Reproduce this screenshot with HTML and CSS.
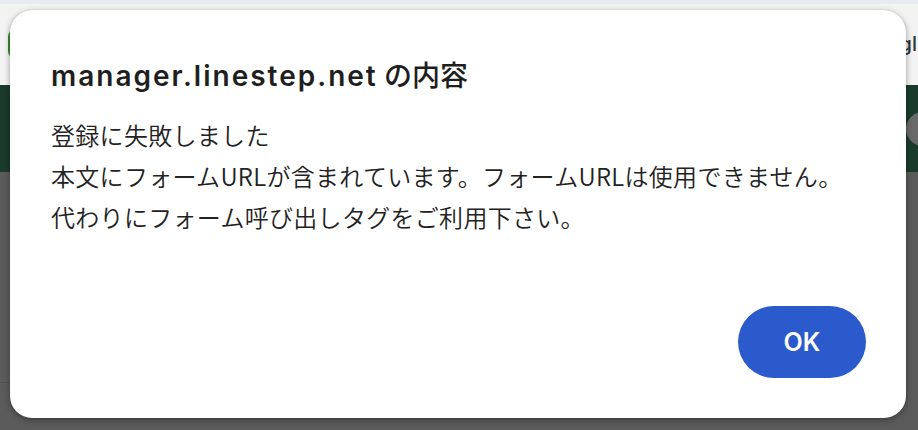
FILE: index.html
```html
<!DOCTYPE html>
<html lang="ja">
<head>
<meta charset="utf-8">
<title>manager.linestep.net の内容</title>
<link rel="stylesheet" href="styles.css">
</head>
<body>
<div class="page">
  <div class="topstrip"></div>
  <div class="toolbar">
    <span class="pill"></span>
    <span class="brand">gl</span>
  </div>
  <div class="band">
    <span class="avatar"></span>
  </div>
  <div class="content">
    <div class="panel"></div>
  </div>
</div>

<div class="dialog" role="alertdialog">
  <h1 class="title"><span class="host">manager.linestep.net</span> <span class="suffix">の内容</span></h1>
  <div class="message">
    <p>登録に失敗しました</p>
    <p>本文にフォームURLが含まれています。フォームURLは使用できません。</p>
    <p>代わりにフォーム呼び出しタグをご利用下さい。</p>
  </div>
  <div class="actions">
    <button class="ok">OK</button>
  </div>
</div>
</body>
</html>
```

FILE: styles.css
```css
html, body {
  margin: 0;
  padding: 0;
}
body {
  width: 918px;
  height: 430px;
  overflow: hidden;
  position: relative;
  font-family: "Noto Sans CJK JP", "Noto Sans", sans-serif;
  background: #5b5b5b;
}
.page {
  display: flex;
  flex-direction: column;
  height: 430px;
}
.topstrip {
  height: 4px;
  background: #e8ecf2;
}
.toolbar {
  height: 81px;
  background: #f3f3f3;
  display: flex;
  align-items: flex-start;
  overflow: hidden;
}
.pill {
  margin: 25px 0 0 8px;
  width: 40px;
  height: 30px;
  border-radius: 8px;
  background: #3b8a2c;
}
.brand {
  margin: 28px 1px 0 auto;
  font-family: "Inter", sans-serif;
  font-size: 20px;
  font-weight: 500;
  color: #333;
}
.band {
  height: 87px;
  background: #1a3b2c;
  display: flex;
  justify-content: flex-end;
  align-items: center;
  overflow: hidden;
}
.avatar {
  width: 34px;
  height: 34px;
  border-radius: 50%;
  background: #696969;
  margin-right: -22px;
}
.content {
  flex: 1;
  background: #5b5b5b;
}
.panel {
  width: 660px;
  height: 210px;
  border-right: 1px solid #4d4d4d;
  border-bottom: 1px solid #4f4f4f;
}

.dialog {
  position: absolute;
  left: 10px;
  top: 10px;
  width: 896px;
  height: 408px;
  box-sizing: border-box;
  background: #ffffff;
  border-radius: 22px;
  box-shadow: 0 2px 6px rgba(0, 0, 0, 0.35), 0 0 1px rgba(0, 0, 0, 0.3);
  padding: 46px 40px 40px 41px;
  display: flex;
  flex-direction: column;
}
.title {
  margin: 0;
  font-size: 28px;
  line-height: 36px;
  color: #1f1f1f;
  white-space: nowrap;
}
.host {
  font-family: "Inter", sans-serif;
  font-weight: 600;
  letter-spacing: 2px;
}
.suffix {
  font-family: "Noto Sans CJK JP", sans-serif;
  font-weight: 500;
}
.message {
  margin-top: 20px;
  font-size: 24px;
  line-height: 41px;
  font-weight: 350;
  color: #222222;
  letter-spacing: 0.3px;
}
.message p {
  margin: 0;
}
.actions {
  margin-top: auto;
  display: flex;
  justify-content: flex-end;
}
.ok {
  width: 128px;
  height: 72px;
  border: none;
  border-radius: 36px;
  background: #2a5acb;
  color: #ffffff;
  font-family: "Inter", sans-serif;
  font-size: 25px;
  font-weight: 600;
  padding: 0;
}
```
